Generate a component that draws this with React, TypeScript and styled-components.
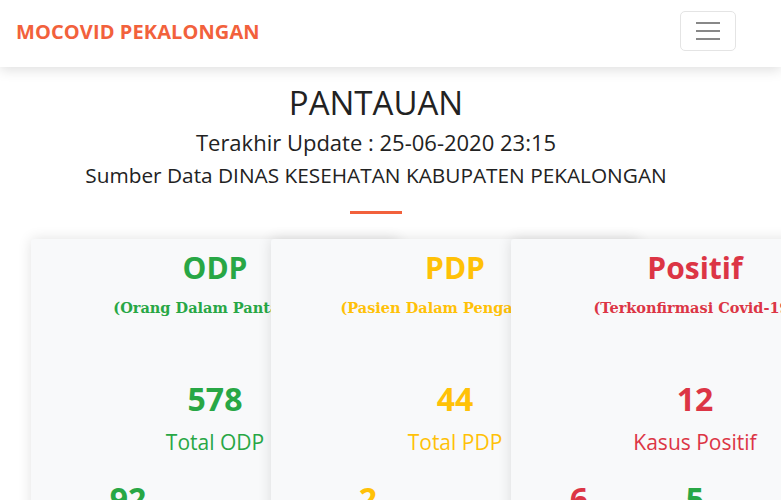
import React from "react";
import styled, {createGlobalStyle} from "styled-components";

const GREEN = "#28a745";
const YELLOW = "#ffc107";
const RED = "#dc3545";
const ORANGE = "#f2613c";

const GlobalStyle = createGlobalStyle`
    html, body {
        margin: 0;
        padding: 0;
    }
    body {
        font-family: "Open Sans", "Noto Sans", Arial, sans-serif;
        color: #212529;
        background: #fff;
        overflow-x: hidden;
    }
`;

const Navbar = styled.nav`
    display: flex;
    align-items: center;
    justify-content: space-between;
    padding: 11px 45px 16px 16px;
    background: #fff;
    box-shadow: 0 3px 12px rgba(0, 0, 0, 0.13);
    position: relative;
    z-index: 5;
`;

const Brand = styled.a`
    font-size: 20px;
    font-weight: 700;
    color: ${ORANGE};
    text-decoration: none;
    letter-spacing: 0.1px;
`;

const Toggler = styled.button`
    width: 56px;
    height: 40px;
    border: 1px solid #e4e4e4;
    border-radius: 5px;
    background: transparent;
    display: flex;
    flex-direction: column;
    align-items: center;
    justify-content: center;
    gap: 6px;
    padding: 0;
    cursor: pointer;
`;

const Bar = styled.span`
    display: block;
    width: 24px;
    height: 2px;
    background: #888;
`;

const Header = styled.header`
    text-align: center;
    padding: 16px 29px 0 0;
`;

const Title = styled.h1`
    margin: 0 0 2px;
    font-size: 33px;
    font-weight: 400;
    line-height: 1.2;
    color: #222;
`;

const SubLine = styled.p<{ size: number }>`
    margin: 0;
    font-size: ${p => p.size}px;
    line-height: 1.55;
    color: #222;
`;

const Divider = styled.div`
    width: 52px;
    height: 3px;
    background: ${ORANGE};
    margin: 20px auto 0;
`;

const CardRow = styled.section`
    display: flex;
    padding: 25px 0 0 31px;
`;

const Card = styled.article<{ tone: string }>`
    flex: 0 0 368px;
    margin-right: -128px;
    background: #f8f9fa;
    border-radius: 3px;
    box-shadow: 0 0 14px rgba(0, 0, 0, 0.12);
    color: ${p => p.tone};
    text-align: center;
    padding: 8px 10px 30px;
    box-sizing: border-box;
    position: relative;

    &:last-child {
        margin-right: 0;
    }
`;

const CardTitle = styled.h2`
    margin: 0;
    font-size: 30px;
    font-weight: 700;
    line-height: 1.4;
`;

const CardSub = styled.p`
    margin: 8px 0 0;
    font-family: "DejaVu Serif", "Liberation Serif", serif;
    font-weight: 700;
    font-size: 14.5px;
    white-space: nowrap;
    line-height: 1.5;
`;

const Total = styled.div`
    margin-top: 60px;
    font-size: 32px;
    font-weight: 700;
    line-height: 1.25;
`;

const TotalLabel = styled.div`
    margin-top: 10px;
    font-size: 21px;
    line-height: 1.3;
`;

const Breakdown = styled.div<{ cols: number }>`
    display: grid;
    grid-template-columns: repeat(${p => p.cols}, 1fr);
    margin-top: 24px;
`;

const Stat = styled.div<{ tone: string }>`
    color: ${p => p.tone};
`;

const StatValue = styled.div`
    font-size: 32px;
    font-weight: 700;
    line-height: 1.2;
`;

const StatLabel = styled.div`
    font-size: 14px;
    margin-top: 4px;
`;

const Section = styled.section`
    padding: 40px 29px 40px 31px;
`;

const SectionTitle = styled.h3`
    margin: 0 0 16px;
    font-size: 22px;
    font-weight: 400;
    text-align: center;
`;

const Table = styled.table`
    width: 100%;
    border-collapse: collapse;
    font-size: 15px;

    th, td {
        border-bottom: 1px solid #dee2e6;
        padding: 10px 8px;
        text-align: left;
    }

    th {
        background: #f8f9fa;
    }
`;

type StatItem = { value: number; label: string; tone: string };

const cards: {
    title: string;
    sub: string;
    total: number;
    label: string;
    tone: string;
    stats: StatItem[];
}[] = [
    {
        title: "ODP",
        sub: "(Orang Dalam Pantauan)",
        total: 578,
        label: "Total ODP",
        tone: GREEN,
        stats: [
            {value: 92, label: "Proses Pemantauan", tone: GREEN},
            {value: 486, label: "Selesai Pemantauan", tone: GREEN},
        ],
    },
    {
        title: "PDP",
        sub: "(Pasien Dalam Pengawasan)",
        total: 44,
        label: "Total PDP",
        tone: YELLOW,
        stats: [
            {value: 2, label: "Proses Pengawasan", tone: YELLOW},
            {value: 42, label: "Selesai Pengawasan", tone: YELLOW},
        ],
    },
    {
        title: "Positif",
        sub: "(Terkonfirmasi Covid-19)",
        total: 12,
        label: "Kasus Positif",
        tone: RED,
        stats: [
            {value: 6, label: "Dirawat", tone: RED},
            {value: 5, label: "Sembuh", tone: GREEN},
            {value: 1, label: "Meninggal", tone: "#343a40"},
        ],
    },
];

const kecamatan = [
    "Kandangserang", "Paninggaran", "Lebakbarang", "Petungkriyono", "Talun",
    "Doro", "Karanganyar", "Kajen", "Kesesi", "Sragi", "Siwalan", "Bojong",
    "Wonopringgo", "Kedungwuni", "Karangdadap", "Buaran", "Tirto", "Wiradesa",
    "Wonokerto",
];

export default function App() {
    return (
        <>
            <GlobalStyle/>
            <Navbar>
                <Brand href="#">MOCOVID PEKALONGAN</Brand>
                <Toggler aria-label="Toggle navigation">
                    <Bar/>
                    <Bar/>
                    <Bar/>
                </Toggler>
            </Navbar>

            <Header>
                <Title>PANTAUAN</Title>
                <SubLine size={22}>Terakhir Update : 25-06-2020 23:15</SubLine>
                <SubLine size={20.8}>Sumber Data DINAS KESEHATAN KABUPATEN PEKALONGAN</SubLine>
                <Divider/>
            </Header>

            <CardRow>
                {cards.map(card => (
                    <Card key={card.title} tone={card.tone}>
                        <CardTitle>{card.title}</CardTitle>
                        <CardSub>{card.sub}</CardSub>
                        <Total>{card.total}</Total>
                        <TotalLabel>{card.label}</TotalLabel>
                        <Breakdown cols={card.stats.length}>
                            {card.stats.map(s => (
                                <Stat key={s.label} tone={s.tone}>
                                    <StatValue>{s.value}</StatValue>
                                    <StatLabel>{s.label}</StatLabel>
                                </Stat>
                            ))}
                        </Breakdown>
                    </Card>
                ))}
            </CardRow>

            <Section>
                <SectionTitle>Sebaran Per Kecamatan</SectionTitle>
                <Table>
                    <thead>
                    <tr>
                        <th>Kecamatan</th>
                        <th>ODP</th>
                        <th>PDP</th>
                        <th>Positif</th>
                    </tr>
                    </thead>
                    <tbody>
                    {kecamatan.map(name => (
                        <tr key={name}>
                            <td>{name}</td>
                            <td>-</td>
                            <td>-</td>
                            <td>-</td>
                        </tr>
                    ))}
                    </tbody>
                </Table>
            </Section>
        </>
    );
}
